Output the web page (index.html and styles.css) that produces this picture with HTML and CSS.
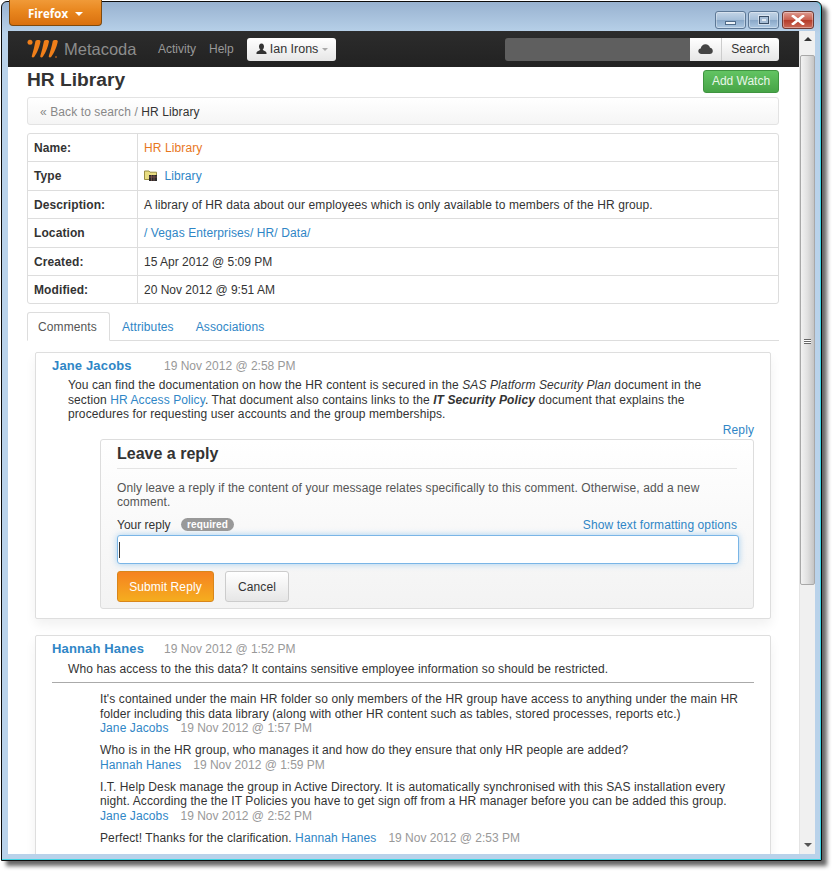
FILE: index.html
```html
<!DOCTYPE html>
<html lang="en">
<head>
<meta charset="utf-8">
<title>HR Library</title>
<link rel="stylesheet" href="styles.css">
</head>
<body>
<div class="window">
  <div class="titlebar">
    <div class="ff-btn">Firefox <span class="ff-caret"></span></div>
    <div class="win-btns">
      <div class="win-btn"><span class="glyph-min"></span></div>
      <div class="win-btn"><span class="glyph-max"></span></div>
      <div class="win-btn close">
        <svg width="14" height="10" viewBox="0 0 14 10"><path d="M2 1 L12 9 M12 1 L2 9" stroke="#fff" stroke-width="2.6" stroke-linecap="square"/></svg>
      </div>
    </div>
  </div>
  <div class="viewport">
    <div class="main">
      <nav class="nav">
        <svg class="logo" width="32" height="20" viewBox="0 0 32 20">
          <circle cx="3" cy="3.200" r="2.500" fill="#f07f1a"/>
          <path d="M8.500 2 C9.500 .6 13.500 .6 13.500 2.500 C12.500 8 10 14 7.500 17.500 C6.500 19 4.300 18.500 4.800 17 C6.300 12 7.600 7 8.500 2 Z" fill="#f07f1a"/>
          <path d="M17 2 C18 .6 22 .6 22 2.500 C21 8 18.500 14 16 17.500 C15 19 12.800 18.500 13.300 17 C14.800 12 16.100 7 17 2 Z" fill="#f07f1a"/>
          <path d="M25.800 2 C26.800 .6 30.800 .6 30.800 2.500 C29.800 8 27 14 24.500 17.500 C23.500 19 21.300 18.500 21.800 17 C23.300 12 24.900 7 25.800 2 Z" fill="#f07f1a"/>
          <circle cx="29" cy="18" r="1" fill="#a05a20"/>
        </svg>
        <span class="brand">Metacoda</span>
        <a class="nav-link">Activity</a>
        <a class="nav-link">Help</a>
        <div class="user-btn">
          <svg width="11" height="12" viewBox="0 0 11 12"><path d="M5.500 0.500 C7.300 0.500 8 2 8 3.500 C8 5 7.200 6.300 6.700 6.800 C6.700 7.600 10.500 8 10.500 10 L10.500 11 L0.500 11 L0.500 10 C0.500 8 4.300 7.600 4.300 6.800 C3.800 6.300 3 5 3 3.500 C3 2 3.700 0.500 5.500 0.500 Z" fill="#333"/></svg>
          <span>Ian Irons</span><span class="user-caret"></span>
        </div>
        <div class="search">
          <div class="search-input"></div>
          <div class="search-cloud">
            <svg width="15" height="10" viewBox="0 0 15 10"><path d="M3.500 10 C1.500 10 0.300 8.700 0.300 7.100 C0.300 5.600 1.300 4.600 2.700 4.400 C3.100 2 5 0.300 7.500 0.300 C9.700 0.300 11.500 1.700 12 3.800 C13.600 4 14.800 5.400 14.800 7 C14.800 8.700 13.500 10 11.700 10 Z" fill="#444"/></svg>
          </div>
          <div class="search-btn">Search</div>
        </div>
      </nav>
      <div class="content">
        <header class="page-head">
          <h1 class="title">HR Library</h1>
          <a class="watch-btn">Add Watch</a>
        </header>
        <div class="crumb"><span class="crumb-mark">«</span> <a class="crumb-link">Back to search</a> <span class="crumb-sep">/</span> <span class="crumb-here">HR Library</span></div>
        <table class="props">
          <tr><th>Name:</th><td class="orange">HR Library</td></tr>
          <tr><th>Type</th><td>
            <svg class="folder" width="13" height="12" viewBox="0 0 13 12">
              <path d="M0.500 2 L5 2 L6 3.200 L12.500 3.200 L12.500 10.500 L0.500 10.500 Z" fill="#e9de83" stroke="#9a8f45"/>
              <rect x="5" y="6" width="8" height="6" fill="#2b2b2b"/>
              <path d="M5 8 H13 M7.500 6 V12 M10 6 V12" stroke="#8a5a50" stroke-width="0.700"/>
            </svg>
            <a class="link">Library</a></td></tr>
          <tr><th>Description:</th><td>A library of HR data about our employees which is only available to members of the HR group.</td></tr>
          <tr><th>Location</th><td><a class="link">/ Vegas Enterprises/ HR/ Data/</a></td></tr>
          <tr><th>Created:</th><td class="plain">15 Apr 2012 @ 5:09 PM</td></tr>
          <tr><th>Modified:</th><td class="plain">20 Nov 2012 @ 9:51 AM</td></tr>
        </table>
        <div class="tabs">
          <div class="tab active">Comments</div>
          <div class="tab">Attributes</div>
          <div class="tab">Associations</div>
        </div>
        <section class="comment first-comment">
          <div class="comment-head"><a class="author">Jane Jacobs</a><span class="date">19 Nov 2012 @ 2:58 PM</span></div>
          <p class="comment-body narrow">You can find the documentation on how the HR content is secured in the <em>SAS Platform Security Plan</em> document in the section <a class="link">HR Access Policy</a>. That document also contains links to the <strong><em>IT Security Policy</em></strong> document that explains the procedures for requesting user accounts and the group memberships.</p>
          <div class="reply-link"><a class="link">Reply</a></div>
          <div class="reply-box">
            <h2 class="reply-title">Leave a reply</h2>
            <p class="reply-note">Only leave a reply if the content of your message relates specifically to this comment. Otherwise, add a new comment.</p>
            <div class="field-row">
              <span class="field-label">Your reply</span><span class="badge">required</span>
              <a class="link fmt">Show text formatting options</a>
            </div>
            <div class="input"><span class="caret"></span></div>
            <div class="actions">
              <div class="btn-submit">Submit Reply</div>
              <div class="btn-cancel">Cancel</div>
            </div>
          </div>
        </section>
        <section class="comment second-comment">
          <div class="comment-head"><a class="author">Hannah Hanes</a><span class="date">19 Nov 2012 @ 1:52 PM</span></div>
          <p class="comment-body">Who has access to the this data? It contains sensitive employee information so should be restricted.</p>
          <div class="replies">
            <div class="reply">It's contained under the main HR folder so only members of the HR group have access to anything under the main HR folder including this data library (along with other HR content such as tables, stored processes, reports etc.)<br><a class="link">Jane Jacobs</a><span class="reply-date">19 Nov 2012 @ 1:57 PM</span></div>
            <div class="reply">Who is in the HR group, who manages it and how do they ensure that only HR people are added?<br><a class="link">Hannah Hanes</a><span class="reply-date">19 Nov 2012 @ 1:59 PM</span></div>
            <div class="reply">I.T. Help Desk manage the group in Active Directory. It is automatically synchronised with this SAS installation every night. According the the IT Policies you have to get sign off from a HR manager before you can be added this group.<br><a class="link">Jane Jacobs</a><span class="reply-date">19 Nov 2012 @ 2:52 PM</span></div>
            <div class="reply">Perfect! Thanks for the clarification. <a class="link">Hannah Hanes</a><span class="reply-date">19 Nov 2012 @ 2:53 PM</span></div>
          </div>
        </section>
      </div>
    </div>
    <div class="scrollbar">
      <div class="sb-arrow"><span class="arrow-up"></span></div>
      <div class="sb-track">
        <div class="sb-thumb"><span class="grip"></span></div>
      </div>
      <div class="sb-arrow bottom"><span class="arrow-down"></span></div>
    </div>
  </div>
</div>
</body>
</html>
```

FILE: styles.css
```css
* { box-sizing: border-box; }
html, body { margin: 0; padding: 0; }
body {
  width: 838px;
  height: 878px;
  overflow: hidden;
  background: #fff;
  padding: 1px 0 0 1px;
  font-family: "Liberation Sans", Arial, sans-serif;
  font-size: 12px;
  line-height: 14.5px;
  letter-spacing: .1px;
  color: #333;
}
a { text-decoration: none; }
p, h1, h2 { margin: 0; }

.window {
  width: 821px;
  height: 860px;
  border: 1px solid #0c0c0c;
  border-radius: 6px 6px 0 0;
  background: linear-gradient(#98b2d0 0, #b9d2ea 32px, #b9d2ea 100%);
  box-shadow: 5px 5px 4px rgba(0,0,0,.6), inset 0 -1px 0 #3fd4e4, inset -1px 0 0 #3fd4e4;
  padding: 0 6px 6px 6px;
  display: flex;
  flex-direction: column;
}
.titlebar {
  height: 29px;
  display: flex;
  justify-content: space-between;
  flex: none;
}
.ff-btn {
  width: 93px;
  height: 26px;
  margin: -2px 0 0 1px;
  border: 1px solid #7d4a10;
  border-top: 0;
  border-radius: 0 0 4px 4px;
  background: linear-gradient(#f09a38, #e8861e 45%, #d9700f);
  color: #fff;
  font-family: "Open Sans", "Liberation Sans", sans-serif;
  font-weight: 700;
  font-size: 11.500px;
  letter-spacing: 0;
  line-height: 27px;
  padding-left: 18px;
}
.ff-caret {
  display: inline-block;
  margin: 0 0 2px 4px;
  border: 4px solid transparent;
  border-top: 4px solid #fff;
  border-bottom: 0;
}
.win-btns { display: flex; gap: 2px; padding-top: 9px; margin-right: 1px; }
.win-btn {
  width: 31px;
  height: 18px;
  border: 1px solid #5d7896;
  border-radius: 3px;
  background: linear-gradient(#c3d4e6, #a6bfd9 48%, #8aa8c8 52%, #adc8e2);
  box-shadow: inset 0 0 0 1px rgba(255,255,255,.35);
  display: flex;
  align-items: center;
  justify-content: center;
}
.win-btn.close {
  width: 32px;
  margin-left: 1px;
  border-color: #6e3a34;
  background: linear-gradient(#dd9a90, #c9604f 48%, #b53c2a 52%, #cb6a58);
}
.glyph-min {
  width: 11px;
  height: 4px;
  margin-top: 5px;
  background: #eef3f8;
  border: 1px solid #4f6a88;
}
.glyph-max {
  width: 10px;
  height: 8px;
  border: 1px solid #3a4e66;
  background: #dfe8f1;
  box-shadow: 0 0 0 1px rgba(255,255,255,.5), inset 0 0 0 2px #a5bcd5;
}

.viewport {
  flex: 1;
  min-height: 0;
  display: flex;
  background: #fff;
  overflow: hidden;
}
.main { flex: 1; min-width: 0; overflow: hidden; }

.nav {
  height: 36px;
  background: linear-gradient(#2c2c2c, #222);
  display: flex;
  align-items: center;
  padding: 0 20px 0 19px;
}
.logo { flex: none; }
.brand { color: #8c8c8c; font-size: 16.500px; letter-spacing: 0; margin-left: 5px; width: 94px; }
.nav-link { color: #999; font-size: 12px; letter-spacing: 0; margin-right: 13px; }
.user-btn {
  width: 89px;
  height: 23px;
  border-radius: 3px;
  background: linear-gradient(#fff, #e6e6e6);
  color: #333;
  display: flex;
  align-items: center;
  padding-left: 9px;
  gap: 3px;
  font-size: 12.500px;
  letter-spacing: 0;
}
.user-caret {
  margin-left: 1px;
  border: 3px solid transparent;
  border-top: 3px solid #aaa;
  border-bottom: 0;
}
.search { display: flex; margin-left: auto; height: 23px; }
.search-input { width: 185px; background: #5f5f5f; border-radius: 3px 0 0 3px; }
.search-cloud {
  width: 32px;
  background: linear-gradient(#fff, #e6e6e6);
  border-right: 1px solid #ccc;
  display: flex;
  align-items: center;
  justify-content: center;
}
.search-btn {
  width: 57px;
  background: linear-gradient(#fff, #e6e6e6);
  border-radius: 0 3px 3px 0;
  color: #333;
  text-align: center;
  line-height: 23px;
}

.content { padding: 0 20px 0 19px; }
.page-head {
  display: flex;
  justify-content: space-between;
  height: 30px;
}
.title {
  font-size: 19.200px;
  letter-spacing: 0;
  line-height: 26px;
  font-weight: 700;
  color: #333;
}
.watch-btn {
  width: 76px;
  height: 23px;
  margin-top: 3px;
  border: 1px solid #3f9440;
  border-radius: 3px;
  background: linear-gradient(#62c462, #47a447);
  color: #e8f6e8;
  text-align: center;
  line-height: 21px;
  letter-spacing: 0;
}
.crumb {
  height: 28px;
  border: 1px solid #e3e3e3;
  border-radius: 3px;
  background: linear-gradient(#fff, #f5f5f5);
  padding-left: 12px;
  line-height: 28px;
}
.crumb-mark, .crumb-link, .crumb-sep { color: #888; }
.crumb-here { color: #333; }

.props {
  width: 100%;
  margin-top: 8px;
  border-collapse: separate;
  border-spacing: 0;
  border: 1px solid #ddd;
  border-radius: 3px;
}
.props th, .props td {
  height: 28.400px;
  padding: 1px 6px 0;
  text-align: left;
  border-top: 1px solid #ddd;
}
.props tr:first-child th, .props tr:first-child td { border-top: 0; height: 27.400px; }
.props th { width: 110px; font-weight: 700; border-right: 1px solid #ddd; }
.props td.plain { letter-spacing: 0; }
.orange { color: #e8771e; }
.link { color: #2f86c6; }
.folder { margin-right: 4px; vertical-align: -1px; }

.tabs {
  display: flex;
  height: 29px;
  margin-top: 8px;
  border-bottom: 1px solid #ddd;
}
.tab {
  padding: 0 10px;
  line-height: 30px;
  color: #2f86c6;
  margin-right: 2px;
  height: 29px;
}
.tab.active {
  width: 83px;
  border: 1px solid #ddd;
  border-bottom: 1px solid #fff;
  border-radius: 3px 3px 0 0;
  color: #555;
  background: #fff;
  line-height: 28px;
}

.comment {
  margin: 11px 8px 0 8px;
  border: 1px solid #dedede;
  border-radius: 2px;
  box-shadow: 0 6px 12px rgba(0,0,0,.06);
  padding: 0 16px;
  background: #fff;
}
.first-comment { height: 267px; }
.second-comment { margin-top: 16px; height: 300px; }
.comment-head { height: 25px; padding-top: 5px; line-height: 15px; }
.second-comment .comment-head { height: 26px; }
.author { display: inline-block; width: 112px; color: #2f86c6; font-weight: 700; font-size: 13px; letter-spacing: .15px; }
.date { color: #999; letter-spacing: 0; }
.comment-body { padding-left: 16px; }
.comment-body.narrow { padding-right: 40px; }
.reply-link { text-align: right; margin-top: 1px; height: 16px; line-height: 15px; }

.reply-box {
  margin-left: 48px;
  height: 170px;
  border: 1px solid #ddd;
  border-radius: 3px;
  background: linear-gradient(#fff, #f3f3f3);
  padding: 0 16px;
}
.reply-title {
  height: 29px;
  font-size: 16px;
  letter-spacing: 0;
  font-weight: 700;
  line-height: 27px;
  color: #333;
  border-bottom: 1px solid #e4e4e4;
}
.reply-note { margin-top: 12px; color: #555; }
.field-row { display: flex; align-items: center; height: 16px; margin-top: 7px; }
.field-label { width: 64px; letter-spacing: 0; }
.badge {
  width: 53px;
  height: 13px;
  border-radius: 7px;
  background: #999;
  color: #fff;
  font-size: 10px;
  font-weight: 700;
  line-height: 13px;
  text-align: center;
}
.fmt { margin-left: auto; }
.input {
  width: 622px;
  height: 29px;
  margin-top: 2px;
  border: 1px solid #7ab5e6;
  border-radius: 3px;
  background: #fff;
  box-shadow: 0 0 6px rgba(82,168,236,.5);
  padding: 6px 0 0 1px;
}
.caret { display: block; width: 1px; height: 16px; background: #333; }
.actions { display: flex; gap: 11px; margin-top: 7px; }
.btn-submit {
  width: 97px;
  height: 31px;
  border: 1px solid #d9861a;
  border-radius: 3px;
  background: linear-gradient(#f58220, #f5ad1f);
  color: #fff;
  text-align: center;
  line-height: 31px;
}
.btn-cancel {
  width: 64px;
  height: 31px;
  border: 1px solid #ccc;
  border-radius: 3px;
  background: linear-gradient(#fff, #e6e6e6);
  color: #333;
  text-align: center;
  line-height: 31px;
}
.replies {
  margin-top: 5px;
  border-top: 1px solid #aaa;
  padding: 9.600px 0 0 48px;
}
.reply { margin-bottom: 7.500px; }
.reply-date { color: #999; margin-left: 12px; letter-spacing: 0; }

.scrollbar {
  width: 16px;
  flex: none;
  display: flex;
  flex-direction: column;
  background: #f0f0f0;
  border-left: 1px solid #e4e4e4;
}
.sb-arrow {
  height: 24px;
  flex: none;
  display: flex;
  justify-content: center;
  padding-top: 6px;
}
.sb-arrow.bottom { height: 18px; padding-top: 7px; }
.arrow-up { width: 0; height: 0; border: 4px solid transparent; border-bottom: 4px solid #333; border-top: 0; }
.arrow-down { width: 0; height: 0; border: 4px solid transparent; border-top: 4px solid #555; border-bottom: 0; }
.sb-track { flex: 1; }
.sb-thumb {
  height: 530px;
  border: 1px solid #a8a8a8;
  border-radius: 2px;
  background: linear-gradient(90deg, #f2f2f2, #e0e0e0 50%, #c4c4c4);
  display: flex;
  justify-content: center;
  padding-top: 283px;
}
.grip {
  width: 7px;
  height: 5px;
  border-top: 1px solid #666;
  border-bottom: 1px solid #666;
  background: linear-gradient(#fff 0 1px, #666 1px 2px, #fff 2px);
}
```
